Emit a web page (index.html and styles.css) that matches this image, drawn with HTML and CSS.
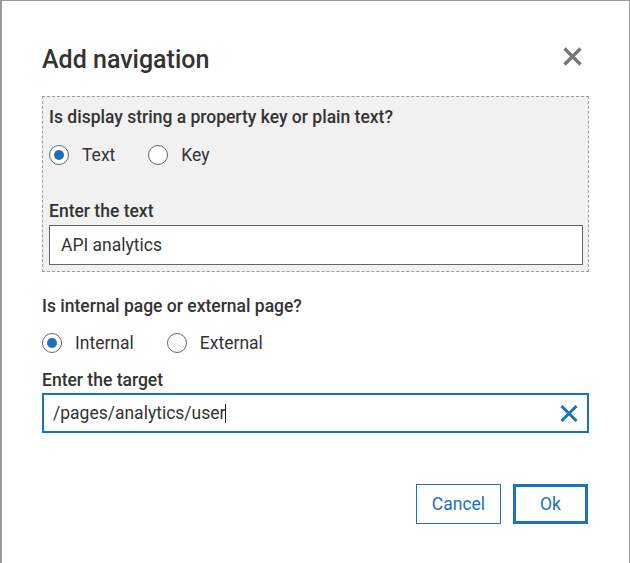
FILE: index.html
```html
<!DOCTYPE html>
<html lang="en">
<head>
<meta charset="utf-8">
<title>Add navigation</title>
<link rel="stylesheet" href="styles.css">
</head>
<body>
<div class="dialog">
  <div class="header">
    <h1 class="title">Add navigation</h1>
    <button class="close" aria-label="Close">
      <svg width="21" height="21" viewBox="0 0 21 21"><path d="M2.5 2.5 L18.5 18.5 M18.5 2.5 L2.5 18.5" stroke="#777" stroke-width="3.4" fill="none"/></svg>
    </button>
  </div>

  <div class="group">
    <div class="question">Is display string a property key or plain text?</div>
    <div class="radios">
      <label class="radio"><span class="dot checked"></span><span class="opt">Text</span></label>
      <label class="radio"><span class="dot"></span><span class="opt">Key</span></label>
    </div>
    <div class="label label-text">Enter the text</div>
    <div class="field">API analytics</div>
  </div>

  <div class="question q2">Is internal page or external page?</div>
  <div class="radios radios2">
    <label class="radio"><span class="dot checked"></span><span class="opt">Internal</span></label>
    <label class="radio"><span class="dot"></span><span class="opt">External</span></label>
  </div>
  <div class="label label-target">Enter the target</div>
  <div class="field field-focus">
    <span class="value">/pages/analytics/user<span class="caret"></span></span>
    <svg class="clear" width="20" height="19" viewBox="0 0 20 19"><path d="M2.5 2 L17.5 17 M17.5 2 L2.5 17" stroke="#1b72bb" stroke-width="3" fill="none"/></svg>
  </div>

  <div class="actions">
    <button class="btn">Cancel</button>
    <button class="btn btn-primary">Ok</button>
  </div>
</div>
</body>
</html>
```

FILE: styles.css
```css
html, body {
  margin: 0;
  padding: 0;
  background: #ffffff;
}

.dialog {
  box-sizing: border-box;
  width: 630px;
  height: 563px;
  border-left: 2px solid #9a9a9a;
  border-top: 1px solid #9a9a9a;
  border-right: 1px solid #9a9a9a;
  padding: 43px 40px 0 40px;
  font-family: Roboto, "Liberation Sans", sans-serif;
  font-size: 17.5px;
  line-height: 20px;
  color: #333333;
  background: #ffffff;
}

.header {
  display: flex;
  justify-content: space-between;
  align-items: flex-start;
  height: 32px;
}

.title {
  margin: 0;
  font-size: 25px;
  line-height: 32px;
  font-weight: 500;
  color: #333333;
}

.close {
  width: 21px;
  height: 21px;
  margin: 2px 6px 0 0;
  padding: 0;
  border: 0;
  background: none;
  display: block;
}

.close svg {
  display: block;
}

.group {
  margin-top: 20px;
  border: 1px dashed #9b9b9b;
  background: #f1f1f1;
  padding: 10px 5px 6px 6px;
}

.question {
  font-weight: 500;
}

.q2 {
  margin-top: 24px;
}

.radios {
  display: flex;
  align-items: center;
  height: 20px;
  margin-top: 18px;
}

.radios2 {
  margin-top: 17px;
}

.radio {
  display: flex;
  align-items: center;
  margin-right: 33px;
}

.dot {
  box-sizing: border-box;
  width: 20px;
  height: 20px;
  border: 1px solid #666666;
  border-radius: 50%;
  background: #ffffff;
  margin-right: 13px;
  display: flex;
  align-items: center;
  justify-content: center;
}

.dot.checked::after {
  content: "";
  width: 10px;
  height: 10px;
  border-radius: 50%;
  background: #1b72bb;
}

.label {
  font-weight: 500;
}

.label-text {
  margin-top: 36px;
}

.label-target {
  margin-top: 17px;
}

.field {
  box-sizing: border-box;
  height: 40px;
  margin-top: 4px;
  border: 1px solid #666666;
  background: #ffffff;
  padding: 0 11px;
  display: flex;
  align-items: center;
}

.field-focus {
  margin-top: 3px;
  border: 2px solid #1b72bb;
  padding: 0 8px 0 9px;
  justify-content: space-between;
}

.value {
  display: flex;
  align-items: center;
}

.caret {
  display: inline-block;
  width: 1px;
  height: 19px;
  background: #222222;
  margin-left: 0;
}

.clear {
  display: block;
}

.actions {
  margin-top: 51px;
  display: flex;
  justify-content: flex-end;
  gap: 12px;
  padding-right: 1px;
}

.btn {
  box-sizing: border-box;
  width: 85px;
  height: 40px;
  border: 1px solid #1b72bb;
  background: #ffffff;
  color: #1b72bb;
  font-family: Roboto, "Liberation Sans", sans-serif;
  font-size: 17.5px;
  padding: 0;
}

.btn-primary {
  width: 75px;
  border: 3px solid #1b72bb;
}
```
